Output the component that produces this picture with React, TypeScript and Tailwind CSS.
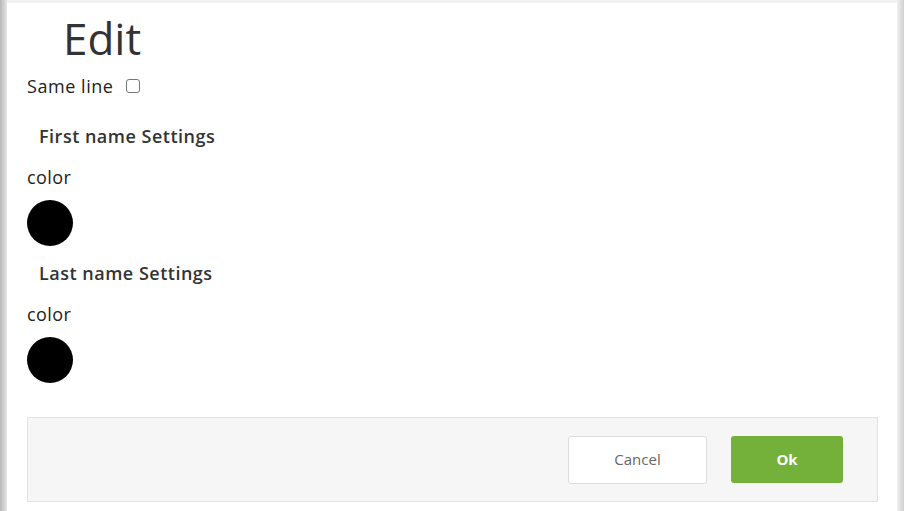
import React from 'react';

const font = { fontFamily: '"Open Sans", "Noto Sans", sans-serif' };

function Section({ title, top }: { title: string; top: string }) {
  return (
    <div>
      <h3 className={`pl-3 ${top} text-[18px] font-semibold leading-[28px] tracking-[0.5px] text-[#333]`}>{title}</h3>
      <div className="pt-[13px] text-[18px] leading-[28px] tracking-[0.4px] text-[#222]">color</div>
      <div className="mt-[9px] h-[46px] w-[46px] rounded-full bg-black" />
    </div>
  );
}

export default function App() {
  return (
    <div className="flex h-[511px] w-[904px] bg-white" style={font}>
      <div className="w-[7px] bg-gradient-to-r from-[#b8b8b8] to-[#e6e6e6]" />
      <div className="flex-1 border-t-[3px] border-[#f2f2f2] pl-[20px] pr-[19px]">
        <h1 className="pl-[36px] pt-[7px] text-[44px] leading-[56px] text-[#333]">Edit</h1>
        <label className="mt-[6px] flex items-center gap-[12px] text-[18px] leading-[28px] tracking-[0.55px] text-[#222]">
          Same line
          <span className="h-[14px] w-[14px] rounded-[3px] border border-[#777] bg-white" />
        </label>
        <Section title="First name Settings" top="pt-[22px]" />
        <Section title="Last name Settings" top="pt-[13px]" />
        <div className="mt-[34px] flex h-[85px] items-center justify-end gap-[24px] border border-[#e3e3e3] bg-[#f6f6f6] pr-[34px]">
          <button className="h-[48px] w-[139px] rounded-[3px] border border-[#dcdcdc] bg-white text-[15px] text-[#666]">
            Cancel
          </button>
          <button className="h-[47px] w-[112px] rounded-[3px] bg-[#73b13a] text-[15px] font-bold text-white">
            Ok
          </button>
        </div>
      </div>
      <div className="w-[7px] bg-gradient-to-r from-[#f0f0f0] to-[#d0d0d0]" />
    </div>
  );
}
